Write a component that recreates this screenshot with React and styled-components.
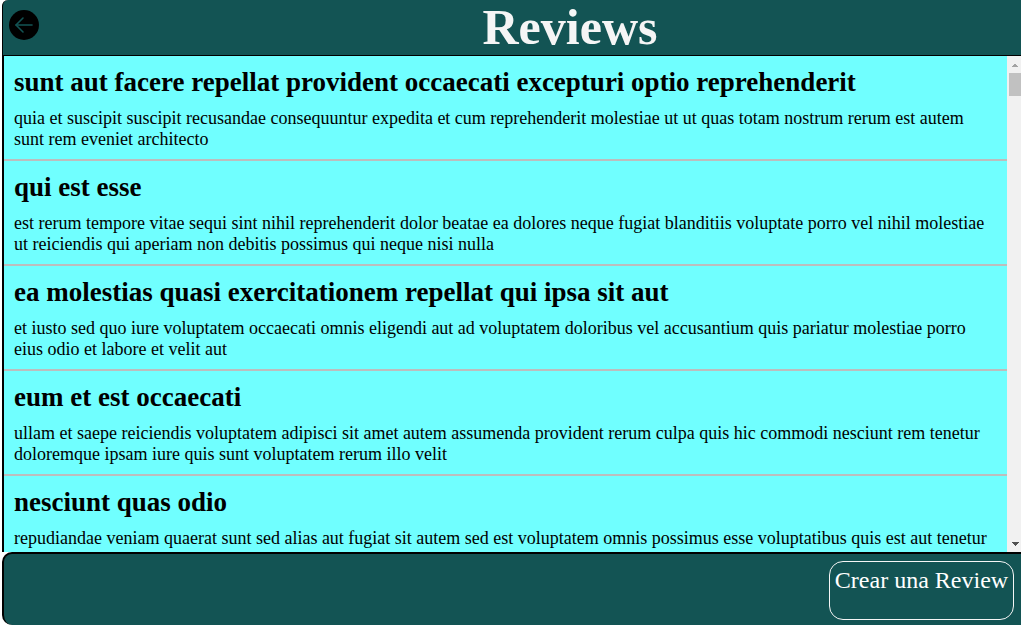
import styled, { createGlobalStyle } from "styled-components";

const reviews = [
  {
    title: "sunt aut facere repellat provident occaecati excepturi optio reprehenderit",
    body: "quia et suscipit suscipit recusandae consequuntur expedita et cum reprehenderit molestiae ut ut quas totam nostrum rerum est autem sunt rem eveniet architecto",
  },
  {
    title: "qui est esse",
    body: "est rerum tempore vitae sequi sint nihil reprehenderit dolor beatae ea dolores neque fugiat blanditiis voluptate porro vel nihil molestiae ut reiciendis qui aperiam non debitis possimus qui neque nisi nulla",
  },
  {
    title: "ea molestias quasi exercitationem repellat qui ipsa sit aut",
    body: "et iusto sed quo iure voluptatem occaecati omnis eligendi aut ad voluptatem doloribus vel accusantium quis pariatur molestiae porro eius odio et labore et velit aut",
  },
  {
    title: "eum et est occaecati",
    body: "ullam et saepe reiciendis voluptatem adipisci sit amet autem assumenda provident rerum culpa quis hic commodi nesciunt rem tenetur doloremque ipsam iure quis sunt voluptatem rerum illo velit",
  },
  {
    title: "nesciunt quas odio",
    body: "repudiandae veniam quaerat sunt sed alias aut fugiat sit autem sed est voluptatem omnis possimus esse voluptatibus quis est aut tenetur dolor neque",
  },
];

export default function App() {
  return (
    <>
      <GlobalStyle />
      <Page>
        <Header>
          <BackButton aria-label="Volver">
            <svg width="24" height="24" viewBox="0 0 24 24" fill="none" stroke="#135454" strokeWidth="1.6" strokeLinecap="round" strokeLinejoin="round">
              <path d="M20 12H4" />
              <path d="M11 5l-7 7 7 7" />
            </svg>
          </BackButton>
          <Title>Reviews</Title>
        </Header>
        <Content>
          <ReviewList>
            {reviews.map((review) => (
              <Review key={review.title}>
                <ReviewTitle>{review.title}</ReviewTitle>
                <ReviewBody>{review.body}</ReviewBody>
              </Review>
            ))}
          </ReviewList>
          <ScrollRail>
            <ScrollArrow />
            <ScrollThumb />
            <ScrollArrow $down />
          </ScrollRail>
        </Content>
        <Footer>
          <CreateButton>Crear una Review</CreateButton>
        </Footer>
      </Page>
    </>
  );
}

const GlobalStyle = createGlobalStyle`
  html, body {
    margin: 0;
    height: 100%;
    overflow: hidden;
  }
  body {
    font-family: "Liberation Serif", "Times New Roman", serif;
    background: #ffffff;
  }
  #root {
    height: 100%;
  }
`;

const Page = styled.div`
  height: 100vh;
  display: flex;
  flex-direction: column;
  padding-left: 2px;
  box-sizing: border-box;
`;

const Header = styled.header`
  flex: 0 0 56px;
  height: 56px;
  box-sizing: border-box;
  display: flex;
  align-items: center;
  padding-left: 6px;
  background: #135454;
  border-left: 1px solid #000;
  border-bottom: 1px solid #000;
  border-top-left-radius: 6px;
`;

const BackButton = styled.button`
  width: 30px;
  height: 30px;
  margin-bottom: 5px;
  padding: 0;
  display: flex;
  align-items: center;
  justify-content: center;
  border: none;
  border-radius: 50%;
  background: #000;
`;

const Title = styled.h1`
  flex: 1;
  margin: 0 0 0 80px;
  text-align: center;
  font-size: 50px;
  line-height: 49px;
  font-weight: bold;
  color: #f5f5f5;
`;

const Content = styled.div`
  flex: 1;
  min-height: 0;
  display: flex;
  border-left: 2px solid #000;
`;

const ReviewList = styled.main`
  flex: 1;
  min-width: 0;
  overflow: hidden;
  background: #70ffff;
`;

const ScrollRail = styled.div`
  flex: 0 0 14px;
  display: flex;
  flex-direction: column;
  background: #f1f1f1;
`;

const ScrollArrow = styled.div`
  height: 17px;
  margin-top: ${(props) => (props.$down ? "auto" : "0")};
  background-image: ${(props) =>
    props.$down
      ? "conic-gradient(from -45deg at 50% 100%, #505050 90deg, transparent 0)"
      : "conic-gradient(from 135deg at 50% 0, #a3a3a3 90deg, transparent 0)"};
  background-repeat: no-repeat;
  background-size: 8px 4px;
  background-position: 4px 7px;
`;

const ScrollThumb = styled.div`
  height: 23px;
  margin-left: 2px;
  background: #c1c1c1;
`;

const Review = styled.article`
  box-sizing: border-box;
  height: 105px;
  padding: 11px 11px 0 10px;
  border-bottom: 2px solid #bdbdbd;
`;

const ReviewTitle = styled.h2`
  margin: 0 0 10px;
  font-size: 27px;
  line-height: 31px;
`;

const ReviewBody = styled.p`
  margin: 0;
  font-size: 18px;
  line-height: normal;
  color: #000;
`;

const Footer = styled.footer`
  flex: 0 0 73px;
  box-sizing: border-box;
  display: flex;
  justify-content: flex-end;
  align-items: flex-start;
  padding: 7px 7px 0 0;
  background: #135454;
  border: 2px solid #000;
  border-right: none;
  border-bottom: none;
  border-radius: 10px 0 0 10px;
`;

const CreateButton = styled.button`
  width: 185px;
  height: 59px;
  padding: 5px 0 0;
  display: flex;
  justify-content: center;
  font-family: inherit;
  font-size: 24px;
  line-height: 27px;
  color: #ffffff;
  background: transparent;
  border: 1px solid #f5f5f5;
  border-radius: 14px;
`;
